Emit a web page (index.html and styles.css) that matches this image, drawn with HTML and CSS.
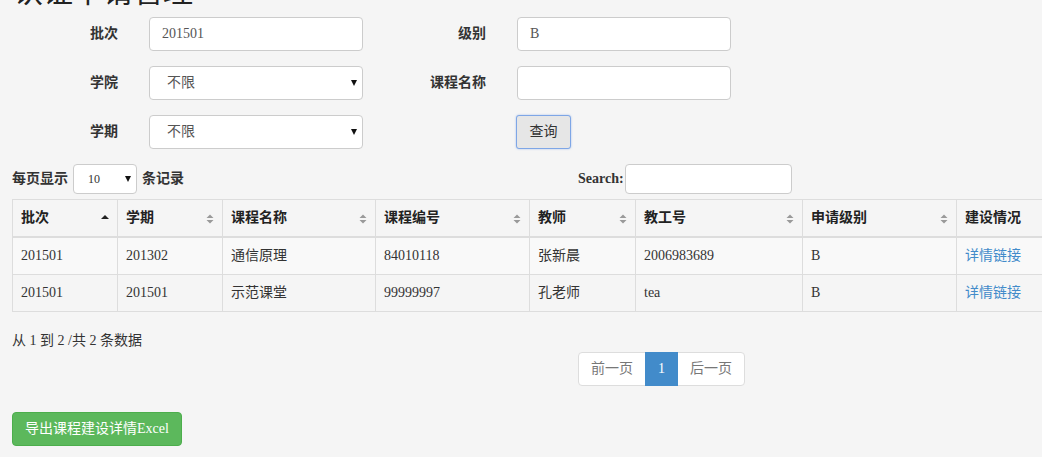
FILE: index.html
```html
<!DOCTYPE html>
<html lang="zh-CN">
<head>
<meta charset="utf-8">
<title>认证申请管理</title>
<link rel="stylesheet" href="styles.css">
</head>
<body>
<h1 class="page-title">认证申请管理</h1>

<form class="search-form">
  <label class="form-label">批次</label>
  <input class="form-control" type="text" value="201501">
  <label class="form-label">级别</label>
  <input class="form-control" type="text" value="B">

  <label class="form-label">学院</label>
  <div class="select-wrap"><select class="form-control form-select"><option>不限</option></select></div>
  <label class="form-label">课程名称</label>
  <input class="form-control" type="text" value="">

  <label class="form-label">学期</label>
  <div class="select-wrap"><select class="form-control form-select"><option>不限</option></select></div>
  <span></span>
  <div><button type="button" class="btn-query">查询</button></div>
</form>

<div class="dt-toolbar">
  <div class="dt-length">
    <span class="bold">每页显示</span>
    <div class="select-wrap small"><select class="form-control length-select"><option>10</option></select></div>
    <span class="bold">条记录</span>
  </div>
  <div class="dt-filter">
    <label class="search-label">Search:</label>
    <input class="form-control search-input" type="text">
  </div>
</div>

<div class="table-wrap">
<table class="data-table">
  <colgroup>
    <col class="c1"><col class="c2"><col class="c3"><col class="c4"><col class="c5"><col class="c6"><col class="c7"><col class="c8">
  </colgroup>
  <thead>
    <tr>
      <th><div class="th-inner"><span>批次</span><svg class="sort" width="8" height="10" viewBox="0 0 8 10"><path d="M0 5 L4 1 L8 5 Z" fill="#222"/></svg></div></th>
      <th><div class="th-inner"><span>学期</span><svg class="sort" width="8" height="10" viewBox="0 0 8 10"><path d="M0.5 4 L4 0.5 L7.5 4 Z M0.5 6 L4 9.5 L7.5 6 Z" fill="#9a9a9a"/></svg></div></th>
      <th><div class="th-inner"><span>课程名称</span><svg class="sort" width="8" height="10" viewBox="0 0 8 10"><path d="M0.5 4 L4 0.5 L7.5 4 Z M0.5 6 L4 9.5 L7.5 6 Z" fill="#9a9a9a"/></svg></div></th>
      <th><div class="th-inner"><span>课程编号</span><svg class="sort" width="8" height="10" viewBox="0 0 8 10"><path d="M0.5 4 L4 0.5 L7.5 4 Z M0.5 6 L4 9.5 L7.5 6 Z" fill="#9a9a9a"/></svg></div></th>
      <th><div class="th-inner"><span>教师</span><svg class="sort" width="8" height="10" viewBox="0 0 8 10"><path d="M0.5 4 L4 0.5 L7.5 4 Z M0.5 6 L4 9.5 L7.5 6 Z" fill="#9a9a9a"/></svg></div></th>
      <th><div class="th-inner"><span>教工号</span><svg class="sort" width="8" height="10" viewBox="0 0 8 10"><path d="M0.5 4 L4 0.5 L7.5 4 Z M0.5 6 L4 9.5 L7.5 6 Z" fill="#9a9a9a"/></svg></div></th>
      <th><div class="th-inner"><span>申请级别</span><svg class="sort" width="8" height="10" viewBox="0 0 8 10"><path d="M0.5 4 L4 0.5 L7.5 4 Z M0.5 6 L4 9.5 L7.5 6 Z" fill="#9a9a9a"/></svg></div></th>
      <th><div class="th-inner"><span>建设情况</span></div></th>
    </tr>
  </thead>
  <tbody>
    <tr class="odd">
      <td>201501</td><td>201302</td><td>通信原理</td><td>84010118</td><td>张新晨</td><td>2006983689</td><td>B</td><td><a href="#" class="link">详情链接</a></td>
    </tr>
    <tr class="even">
      <td>201501</td><td>201501</td><td>示范课堂</td><td>99999997</td><td>孔老师</td><td>tea</td><td>B</td><td><a href="#" class="link">详情链接</a></td>
    </tr>
  </tbody>
</table>
</div>

<div class="dt-footer">
  <div class="dt-info">从 1 到 2 /共 2 条数据</div>
  <ul class="pagination">
    <li class="page disabled">前一页</li>
    <li class="page active">1</li>
    <li class="page disabled">后一页</li>
  </ul>
</div>

<button type="button" class="btn-export">导出课程建设详情Excel</button>
</body>
</html>
```

FILE: styles.css
```css
html {
  background: #f5f5f5;
  overflow: hidden;
}
body {
  margin: 0;
  padding: 0 12px;
  background: #f5f5f5;
  color: #333;
  font-family: "Liberation Serif", "Noto Sans CJK SC", serif;
  font-size: 14px;
  line-height: 20px;
}
.page-title {
  margin: -23px 0 10px 1px;
  font-size: 30px;
  line-height: 30px;
  font-weight: normal;
  color: #222;
}
.search-form {
  display: grid;
  grid-template-columns: 106px 214px 92px 214px;
  grid-auto-rows: 34px;
  column-gap: 31px;
  row-gap: 15px;
}
.form-label {
  font-weight: bold;
  text-align: right;
  align-self: center;
  color: #333;
}
.form-control {
  box-sizing: border-box;
  height: 34px;
  width: 100%;
  margin: 0;
  padding: 6px 12px;
  border: 1px solid #ccc;
  border-radius: 4px;
  background: #fff;
  color: #555;
  font-family: "Liberation Serif", "Noto Sans CJK SC", serif;
  font-size: 14px;
  line-height: 20px;
}
.select-wrap {
  position: relative;
}
.select-wrap::after {
  content: "";
  position: absolute;
  right: 6px;
  top: 50%;
  margin-top: -3px;
  border-left: 3.5px solid transparent;
  border-right: 3.5px solid transparent;
  border-top: 6px solid #111;
  pointer-events: none;
}
.form-select {
  appearance: none;
  -webkit-appearance: none;
  padding-left: 17px;
}
.btn-query {
  box-sizing: border-box;
  height: 34px;
  width: 55px;
  margin-left: -1px;
  padding: 6px 12px;
  border: 1px solid #7ea6e6;
  border-radius: 3px;
  background: #e6e6e6;
  box-shadow: 0 0 2px rgba(102, 150, 230, 0.6);
  color: #333;
  font-family: "Liberation Serif", "Noto Sans CJK SC", serif;
  font-size: 14px;
  line-height: 20px;
}
.dt-toolbar {
  display: grid;
  grid-template-columns: 566px 1fr;
  margin-top: 15px;
  height: 30px;
}
.dt-length {
  display: flex;
  align-items: center;
  gap: 5px;
}
.bold {
  font-weight: bold;
}
.select-wrap.small {
  width: 64px;
}
.length-select {
  appearance: none;
  -webkit-appearance: none;
  height: 30px;
  padding: 4px 10px 4px 14px;
  font-size: 12px;
  color: #333;
}
.dt-filter {
  display: flex;
  align-items: center;
}
.search-label {
  font-weight: bold;
  margin-right: 1px;
}
.search-input {
  width: 167px;
  height: 30px;
}
.table-wrap {
  margin-top: 5px;
  width: 1100px;
}
.data-table {
  border-collapse: collapse;
  table-layout: fixed;
  width: 1050px;
  border: 1px solid #ddd;
}
.c1 { width: 105px; }
.c2 { width: 105px; }
.c3 { width: 153px; }
.c4 { width: 154px; }
.c5 { width: 106px; }
.c6 { width: 167px; }
.c7 { width: 154px; }
.c8 { width: 106px; }
.data-table th,
.data-table td {
  border: 1px solid #ddd;
  padding: 8px;
  text-align: left;
  line-height: 20px;
  white-space: nowrap;
  overflow: hidden;
}
.data-table th {
  border-bottom-width: 2px;
  font-weight: bold;
  color: #222;
}
.th-inner {
  display: flex;
  justify-content: space-between;
  align-items: center;
}
.sort {
  display: block;
  margin-top: 1px;
}
.data-table tr.odd td {
  background: #f9f9f9;
}
.link {
  color: #428bca;
  text-decoration: none;
}
.dt-footer {
  display: grid;
  grid-template-columns: 566px 1fr;
  align-items: start;
}
.dt-info {
  padding-top: 19px;
}
.pagination {
  display: flex;
  list-style: none;
  margin: 40px 0 0;
  padding: 0;
}
.page {
  padding: 6px 12px;
  border: 1px solid #ddd;
  background: #fff;
  color: #777;
  line-height: 20px;
}
.page + .page {
  margin-left: -1px;
}
.page:first-child {
  border-radius: 4px 0 0 4px;
}
.page:last-child {
  border-radius: 0 4px 4px 0;
}
.page.active {
  background: #428bca;
  border-color: #428bca;
  color: #fff;
  position: relative;
}
.btn-export {
  display: block;
  margin-top: 26px;
  box-sizing: border-box;
  height: 34px;
  padding: 6px 12px;
  border: 1px solid #4cae4c;
  border-radius: 4px;
  background: #5cb85c;
  color: #fff;
  font-family: "Liberation Serif", "Noto Sans CJK SC", serif;
  font-size: 14px;
  line-height: 20px;
}
```
